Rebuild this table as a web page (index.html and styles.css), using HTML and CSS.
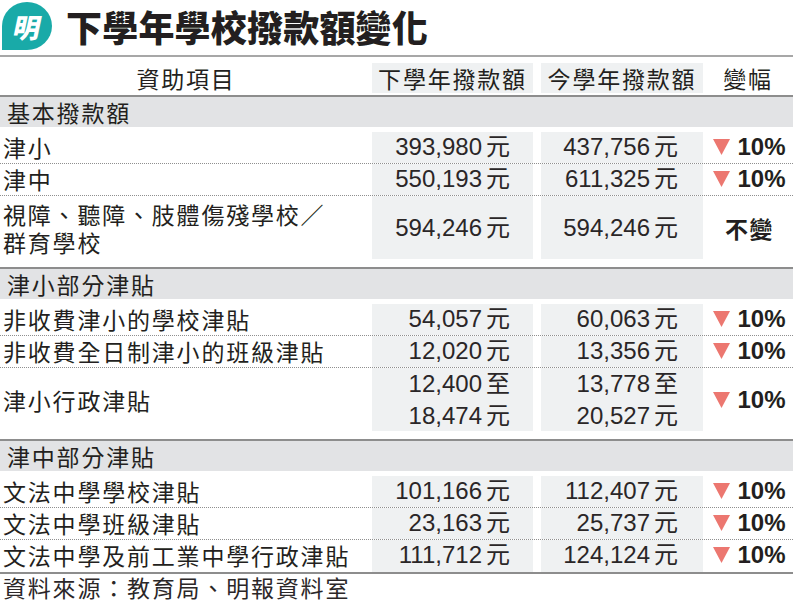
FILE: index.html
```html
<!DOCTYPE html>
<html lang="zh-Hant">
<head>
<meta charset="utf-8">
<title>下學年學校撥款額變化</title>
<link rel="stylesheet" href="styles.css">
</head>
<body>
<div class="page">
  <header class="title">
    <div class="logo"><span>明</span></div>
    <h1>下學年學校撥款額變化</h1>
  </header>

  <div class="table">
    <div class="head">
      <div class="c-label">資助項目</div>
      <div class="c-v1"><span>下學年撥款額</span></div>
      <div class="c-v2"><span>今學年撥款額</span></div>
      <div class="c-chg">變幅</div>
    </div>

    <section class="group gap">
      <div class="sec">基本撥款額</div>
      <div class="rows">
        <div class="row">
          <div class="c-label"><span>津小</span></div>
          <div class="c-v1"><span class="val">393,980<span class="yuan">元</span></span></div>
          <div class="c-v2"><span class="val">437,756<span class="yuan">元</span></span></div>
          <div class="c-chg"><svg class="tri" viewBox="0 0 17 16"><polygon points="0,0 17,0 8.5,16"/></svg><b>10%</b></div>
        </div>
        <div class="row">
          <div class="c-label"><span>津中</span></div>
          <div class="c-v1"><span class="val">550,193<span class="yuan">元</span></span></div>
          <div class="c-v2"><span class="val">611,325<span class="yuan">元</span></span></div>
          <div class="c-chg"><svg class="tri" viewBox="0 0 17 16"><polygon points="0,0 17,0 8.5,16"/></svg><b>10%</b></div>
        </div>
        <div class="row tall last">
          <div class="c-label"><span class="two">視障、聽障、肢體傷殘學校／<br>群育學校</span></div>
          <div class="c-v1"><span class="val">594,246<span class="yuan">元</span></span></div>
          <div class="c-v2"><span class="val">594,246<span class="yuan">元</span></span></div>
          <div class="c-chg"><b class="cjk">不變</b></div>
        </div>
      </div>
    </section>

    <section class="group gap">
      <div class="sec">津小部分津貼</div>
      <div class="rows">
        <div class="row">
          <div class="c-label"><span>非收費津小的學校津貼</span></div>
          <div class="c-v1"><span class="val">54,057<span class="yuan">元</span></span></div>
          <div class="c-v2"><span class="val">60,063<span class="yuan">元</span></span></div>
          <div class="c-chg"><svg class="tri" viewBox="0 0 17 16"><polygon points="0,0 17,0 8.5,16"/></svg><b>10%</b></div>
        </div>
        <div class="row">
          <div class="c-label"><span>非收費全日制津小的班級津貼</span></div>
          <div class="c-v1"><span class="val">12,020<span class="yuan">元</span></span></div>
          <div class="c-v2"><span class="val">13,356<span class="yuan">元</span></span></div>
          <div class="c-chg"><svg class="tri" viewBox="0 0 17 16"><polygon points="0,0 17,0 8.5,16"/></svg><b>10%</b></div>
        </div>
        <div class="row tall last">
          <div class="c-label"><span>津小行政津貼</span></div>
          <div class="c-v1"><span class="val stack">12,400<span class="yuan">至</span><br>18,474<span class="yuan">元</span></span></div>
          <div class="c-v2"><span class="val stack">13,778<span class="yuan">至</span><br>20,527<span class="yuan">元</span></span></div>
          <div class="c-chg"><svg class="tri" viewBox="0 0 17 16"><polygon points="0,0 17,0 8.5,16"/></svg><b>10%</b></div>
        </div>
      </div>
    </section>

    <section class="group">
      <div class="sec">津中部分津貼</div>
      <div class="rows">
        <div class="row">
          <div class="c-label"><span>文法中學學校津貼</span></div>
          <div class="c-v1"><span class="val">101,166<span class="yuan">元</span></span></div>
          <div class="c-v2"><span class="val">112,407<span class="yuan">元</span></span></div>
          <div class="c-chg"><svg class="tri" viewBox="0 0 17 16"><polygon points="0,0 17,0 8.5,16"/></svg><b>10%</b></div>
        </div>
        <div class="row">
          <div class="c-label"><span>文法中學班級津貼</span></div>
          <div class="c-v1"><span class="val">23,163<span class="yuan">元</span></span></div>
          <div class="c-v2"><span class="val">25,737<span class="yuan">元</span></span></div>
          <div class="c-chg"><svg class="tri" viewBox="0 0 17 16"><polygon points="0,0 17,0 8.5,16"/></svg><b>10%</b></div>
        </div>
        <div class="row last">
          <div class="c-label"><span>文法中學及前工業中學行政津貼</span></div>
          <div class="c-v1"><span class="val">111,712<span class="yuan">元</span></span></div>
          <div class="c-v2"><span class="val">124,124<span class="yuan">元</span></span></div>
          <div class="c-chg"><svg class="tri" viewBox="0 0 17 16"><polygon points="0,0 17,0 8.5,16"/></svg><b>10%</b></div>
        </div>
      </div>
    </section>
  </div>

  <footer class="source">資料來源：教育局、明報資料室</footer>
</div>
</body>
</html>
```

FILE: styles.css
```css
* { box-sizing: border-box; }

html, body {
  margin: 0;
  padding: 0;
  background: #ffffff;
}

body {
  width: 793px;
  height: 602px;
  overflow: hidden;
  color: #231f20;
  font-family: "Noto Sans CJK TC", "Noto Sans CJK JP", sans-serif;
}

.page {
  width: 793px;
}

/* ---------- title ---------- */
.title {
  height: 55px;
  display: flex;
  align-items: flex-start;
  padding-top: 2px;
  padding-left: 2px;
}

.logo {
  width: 50px;
  height: 48px;
  background: #19aaa8;
  border-radius: 50% 50% 50% 0;
  display: flex;
  align-items: center;
  justify-content: center;
}

.logo span {
  color: #ffffff;
  font-size: 27px;
  font-weight: 900;
  line-height: 1;
  transform: skewX(-12deg);
  margin-top: 1px;
}

.title h1 {
  margin: 0 0 0 14px;
  font-size: 36px;
  line-height: 48px;
  font-weight: 900;
  letter-spacing: 0.2px;
  color: #231f20;
}

/* ---------- table ---------- */
.table {
  border-top: 2px solid #a7a7a7;
}

.head,
.row {
  display: flex;
  font-size: 23px;
  letter-spacing: 1.8px;
}

.head {
  height: 40px;
  padding-top: 6px;
  padding-bottom: 2px;
  border-bottom: 2px solid #8d8d8d;
}

.head > div {
  display: flex;
  align-items: center;
  justify-content: center;
}

.head .c-v1,
.head .c-v2 {
  background: #eff1f2;
}

.c-label {
  width: 372px;
  flex: none;
}

.c-v1 {
  width: 161px;
  flex: none;
}

.c-v2 {
  width: 162px;
  margin-left: 8px;
  flex: none;
}

.c-chg {
  width: 90px;
  flex: none;
}

.group {
  border-bottom: 2px solid #8d8d8d;
}

.group.gap .rows {
  padding-bottom: 8px;
}

.sec {
  height: 30px;
  background: #e2e3e5;
  padding-left: 7px;
  font-size: 23px;
  letter-spacing: 1.8px;
  line-height: 30px;
}

.rows {
  padding-top: 5px;
}

.row {
  height: 32px;
  border-bottom: 1px dotted #8f8f8f;
}

.row.last {
  border-bottom: none;
}

.row.tall {
  height: 63px;
}

.row > div {
  display: flex;
  align-items: center;
}

.row:not(.tall) > div {
  padding-bottom: 2px;
}

.row .c-label {
  padding-left: 3px;
  line-height: 28px;
}

.row .c-v1,
.row .c-v2 {
  background: #eff1f2;
  justify-content: flex-end;
  text-align: right;
  font-family: "Liberation Sans", "Noto Sans CJK TC", sans-serif;
  font-size: 24px;
  letter-spacing: 0;
  color: #2a2627;
}

.row .c-v1 { padding-right: 23px; }
.row .c-v2 { padding-right: 25px; }

.val {
  display: block;
  line-height: 28px;
}

.val.stack {
  line-height: 32px;
}

.yuan {
  font-family: "Noto Sans CJK TC", "Noto Sans CJK JP", sans-serif;
  margin-left: 4px;
  line-height: 1;
}

.row .c-chg {
  justify-content: center;
  padding-left: 3px;
}

.tri {
  width: 17px;
  height: 16px;
  fill: #ec7770;
  margin-right: 7px;
  flex: none;
}

.c-chg b {
  font-family: "Liberation Sans", sans-serif;
  font-weight: 700;
  font-size: 24px;
  letter-spacing: 0;
  color: #231f20;
}

.c-chg b.cjk {
  font-family: "Noto Sans CJK TC", "Noto Sans CJK JP", sans-serif;
  font-size: 23px;
  letter-spacing: 1.5px;
}

/* ---------- footer ---------- */
.source {
  height: 28px;
  padding-left: 3px;
  font-size: 23px;
  letter-spacing: 1.8px;
  line-height: 26px;
  color: #2b2728;
}
```
